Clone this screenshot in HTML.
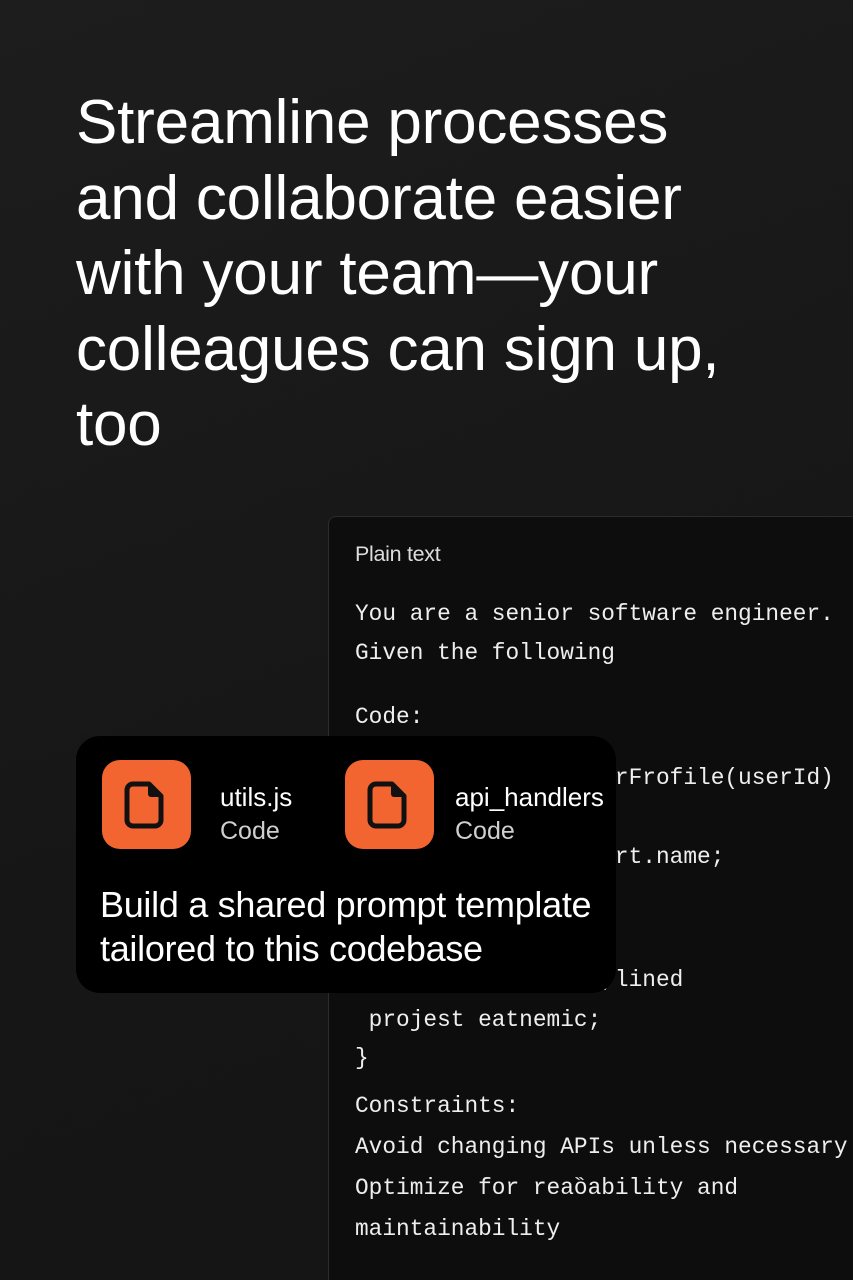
<!DOCTYPE html>
<html><head><meta charset="utf-8"><style>
html,body{margin:0;padding:0;width:853px;height:1280px;overflow:hidden}
body{background:linear-gradient(160deg,#1d1d1d 0%,#161616 60%,#141414 100%);position:relative;font-family:"Liberation Sans",sans-serif;color:#fff}
h1{position:absolute;left:76px;top:85px;margin:0;font-weight:400;font-size:62px;line-height:75.5px;letter-spacing:-0.2px;white-space:nowrap}
.panel{position:absolute;left:328px;top:516px;width:540px;height:780px;background:#0d0d0d;border:1px solid #2c2c2c;border-radius:8px}
.pt{position:absolute;left:355px;top:542px;font-size:21.5px;color:#ddd;letter-spacing:-0.3px}
.code{position:absolute;left:355px;font-family:"Liberation Mono",monospace;font-size:22.8px;color:#eee;white-space:pre;line-height:26px}
.card{position:absolute;left:76px;top:736px;width:540px;height:257px;background:#000;border-radius:24px}
.ic{position:absolute;top:24px;width:89px;height:89px;background:#f26531;border-radius:18px}
.ic svg{position:absolute;left:22px;top:20px}
.nm{position:absolute;top:46px;font-size:26px;color:#fff;white-space:nowrap}
.sb{position:absolute;top:81px;font-size:25px;color:#cfcfcf}
.big{position:absolute;left:24px;top:147px;font-size:36px;line-height:44px;color:#fff;white-space:nowrap;letter-spacing:-0.3px}
</style></head><body>
<h1>Streamline processes<br>and collaborate easier<br>with your team—your<br>colleagues can sign up,<br>too</h1>
<div class="panel"></div>
<div class="pt">Plain text</div>
<div class="code" style="top:601px">You are a senior software engineer.</div>
<div class="code" style="top:640px">Given the following</div>
<div class="code" style="top:704px">Code:</div>
<div class="code" style="top:765px">                   rFrofile(userId)</div>
<div class="code" style="top:844px">                   rt.name;</div>
<div class="code" style="top:967px">                  ,lined</div>
<div class="code" style="top:1007px"> projest eatnemic;</div>
<div class="code" style="top:1045px">}</div>
<div class="code" style="top:1093px">Constraints:</div>
<div class="code" style="top:1134px">Avoid changing APIs unless necessary</div>
<div class="code" style="top:1175px">Optimize for reaȍability and</div>
<div class="code" style="top:1216px">maintainability</div>
<div class="card">
  <div class="ic" style="left:26px"><svg width="46" height="50" viewBox="0 0 46 50"><path d="M9 4h16l12 12v24a6 6 0 0 1-6 6H9a6 6 0 0 1-6-6V10a6 6 0 0 1 6-6z" fill="none" stroke="#111" stroke-width="5" stroke-linejoin="round"/><path d="M24 5v9a3 3 0 0 0 3 3h9z" fill="#111"/></svg></div>
  <div class="nm" style="left:144px">utils.js</div>
  <div class="sb" style="left:144px">Code</div>
  <div class="ic" style="left:269px"><svg width="46" height="50" viewBox="0 0 46 50"><path d="M9 4h16l12 12v24a6 6 0 0 1-6 6H9a6 6 0 0 1-6-6V10a6 6 0 0 1 6-6z" fill="none" stroke="#111" stroke-width="5" stroke-linejoin="round"/><path d="M24 5v9a3 3 0 0 0 3 3h9z" fill="#111"/></svg></div>
  <div class="nm" style="left:379px">api_handlers</div>
  <div class="sb" style="left:379px">Code</div>
  <div class="big">Build a shared prompt template<br>tailored to this codebase</div>
</div>
</body></html>
